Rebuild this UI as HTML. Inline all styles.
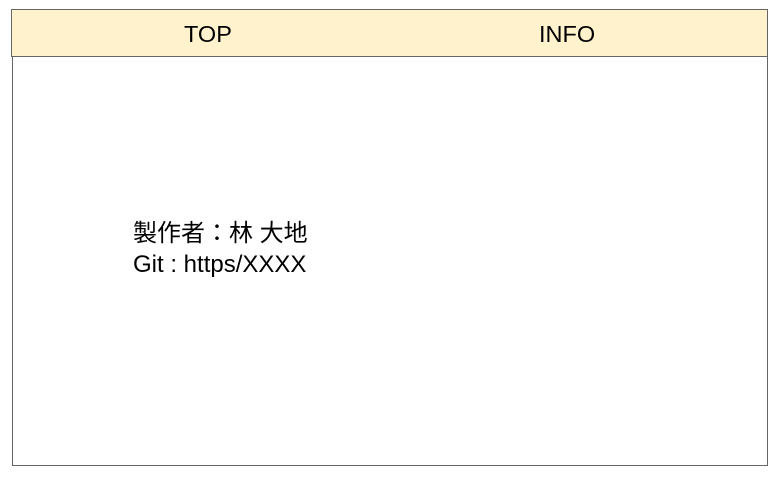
<!DOCTYPE html>
<html><head><meta charset="utf-8"><style>
body{margin:0;width:781px;height:479px;background:#fff;position:relative;font-family:"Liberation Sans","Noto Sans CJK JP",sans-serif;color:#000}
.hdr{position:absolute;left:11px;top:9px;width:755px;height:46px;background:#fff2cc;border:1px solid #666}
.box{position:absolute;left:12px;top:56px;width:754px;height:409px;border:1px solid #666;border-top:none}
.t{position:absolute;top:10px;font-size:23.5px;line-height:28px}
.txt{position:absolute;left:133px;top:218px;font-size:24px;line-height:31px}
</style></head><body>
<div class="hdr"><span class="t" style="left:172px">TOP</span><span class="t" style="left:527px">INFO</span></div>
<div class="box"></div>
<div class="txt">製作者：林 大地<br>Git : https/XXXX</div>
</body></html>
